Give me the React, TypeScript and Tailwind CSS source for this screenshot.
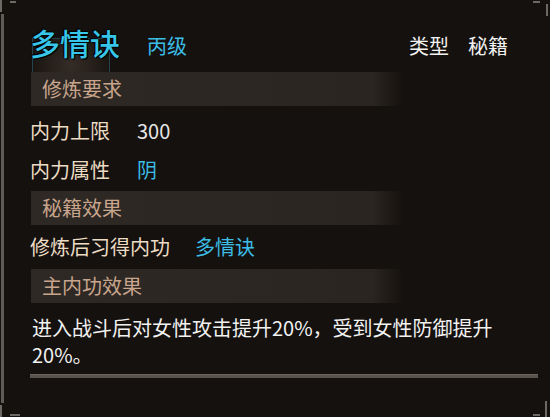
import React from "react"

const font = "font-['Noto_Sans_CJK_SC','Noto_Sans',sans-serif]"

function SectionBar({ title }: { title: string }) {
  return (
    <div className="h-[34px] w-[372px] flex items-center pl-[11px] bg-[linear-gradient(to_right,#2e2925_0%,#2a2520_92%,rgba(42,37,32,0)_100%)]">
      <span className="text-[20px] leading-none text-[#c8a58c]">{title}</span>
    </div>
  )
}

export default function App() {
  return (
    <div className={`relative w-[550px] h-[417px] overflow-hidden bg-[#15110e] ${font}`}>
      {/* frame decorations */}
      <div className="absolute left-[1px] top-[14px] bottom-[14px] w-[3px] bg-[#5f5b56]" />
      <div className="absolute left-0 top-0 w-[2px] h-[12px] bg-[#6c6863]" />
      <div className="absolute left-[10px] top-[1px] w-[6px] h-[2px] bg-[#6c6863]" />
      <div className="absolute left-0 bottom-0 w-[2px] h-[12px] bg-[#6c6863]" />
      <div className="absolute left-[10px] bottom-[1px] w-[10px] h-[2px] bg-[#6c6863]" />
      <div className="absolute right-[2px] top-[4px] w-[2px] h-[12px] bg-[#6c6863]" />
      <div className="absolute right-[10px] top-[1px] w-[7px] h-[2px] bg-[#6c6863]" />
      <div className="absolute right-[3px] bottom-0 w-[2px] h-[16px] bg-[#6c6863]" />
      <div className="absolute right-[10px] bottom-[1px] w-[7px] h-[2px] bg-[#6c6863]" />

      {/* item icon behind the title */}
      <div className="absolute left-[32px] top-[38px] w-[78px] h-[68px] border border-[#23434d] bg-[radial-gradient(ellipse_at_50%_40%,#352c26_0%,#1b1612_70%)]" />

      <div className="relative pl-[30px] pt-[27px]">
        <div className="flex items-end h-[30px] pr-[42px]">
          <span className="text-[30px] leading-none font-medium text-[#37c6ea] [text-shadow:0_0_2px_#000,1px_1px_0_#000,-1px_-1px_0_#000]">多情诀</span>
          <span className="ml-[27px] text-[20px] leading-none text-[#3bbde6] mb-[1px]">丙级</span>
          <div className="ml-auto flex gap-[19px] text-[20px] leading-none text-[#f2f2f2] mb-[1px]">
            <span>类型</span>
            <span>秘籍</span>
          </div>
        </div>

        <div className="mt-[15px] ml-[1px]">
          <SectionBar title="修炼要求" />
        </div>

        <div className="h-[48px] flex items-center pt-[2px] text-[20px] leading-none">
          <span className="text-[#ecdcc4]">内力上限</span>
          <span className="ml-[27px] text-[#e6e6e6]">300</span>
        </div>
        <div className="h-[32px] flex items-center text-[20px] leading-none">
          <span className="text-[#ecdcc4]">内力属性</span>
          <span className="ml-[27px] text-[#3bbde6]">阴</span>
        </div>

        <div className="mt-[5px] ml-[1px]">
          <SectionBar title="秘籍效果" />
        </div>

        <div className="h-[44px] flex items-center text-[20px] leading-none">
          <span className="text-[#ecdcc4]">修炼后习得内功</span>
          <span className="ml-[25px] text-[#3bbde6]">多情诀</span>
        </div>

        <div className="ml-[1px]">
          <SectionBar title="主内功效果" />
        </div>

        <div className="pt-[11px] pl-[2px] text-[20px] leading-[27px] text-[#f2f2f2]">
          进入战斗后对女性攻击提升20%，受到女性防御提升
          <br />
          20%。
        </div>

        <div className="mt-[6px] w-[508px] h-[4px] bg-[#58534c] border-t border-[#6a645c]" />
      </div>
    </div>
  )
}
